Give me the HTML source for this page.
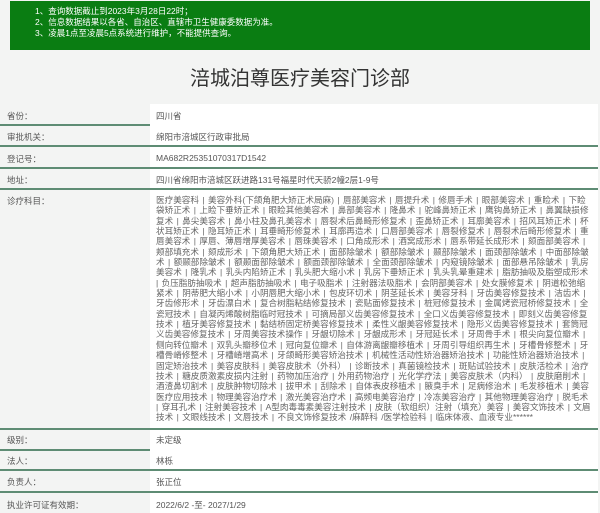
<!DOCTYPE html>
<html><head><meta charset="utf-8"><style>
body{margin:0;width:600px;height:513px;overflow:hidden;background:#f3f4f3;font-family:"Liberation Sans","Noto Sans CJK SC",sans-serif;color:#555;}
.banner{position:absolute;left:10px;top:1px;width:580px;height:49px;background:#0a7d12;color:#fff;font-size:8.5px;line-height:11px;box-sizing:border-box;padding:5px 0 0 25px;}
.title{position:absolute;left:0;top:62px;width:600px;text-align:center;font-size:20px;color:#333;}
.white{position:absolute;left:150px;top:104px;width:448px;height:409px;background:#fff;}
.row{position:absolute;left:0;width:598px;font-size:8.5px;}
.row .l{position:absolute;left:7px;}
.row .v{position:absolute;left:156px;}
.line{position:absolute;left:0;height:2px;background:#5e8c74;}
.items{position:absolute;left:156px;top:195px;width:436px;font-size:8.6px;line-height:10.35px;word-spacing:1px;color:#666;word-break:break-all;}
</style></head><body>
<div class="banner">1、查询数据截止到2023年3月28日22时；<br>2、信息数据结果以各省、自治区、直辖市卫生健康委数据为准。<br>3、凌晨1点至凌晨5点系统进行维护，不能提供查询。</div>
<div class="title">涪城泊尊医疗美容门诊部</div>
<div class="white"></div>
<div class="row" style="top:110px"><span class="l">省份：</span><span class="v">四川省</span></div>
<div class="line" style="top:124px;width:150px"></div>
<div class="row" style="top:131px"><span class="l">审批机关：</span><span class="v">绵阳市涪城区行政审批局</span></div>
<div class="line" style="top:145px;width:598px"></div>
<div class="row" style="top:153px"><span class="l">登记号：</span><span class="v">MA682R25351070317D1542</span></div>
<div class="line" style="top:167px;width:598px"></div>
<div class="row" style="top:174px"><span class="l">地址：</span><span class="v">四川省绵阳市涪城区跃进路131号福星时代天骄2幢2层1-9号</span></div>
<div class="line" style="top:188px;width:598px"></div>
<div class="row" style="top:195px"><span class="l">诊疗科目：</span></div>
<div class="items">医疗美容科 | 美容外科(下颌角肥大矫正术局麻) | 唇部美容术 | 唇提升术 | 修唇手术 | 眼部美容术 | 重睑术 | 下睑袋矫正术 | 上睑下垂矫正术 | 眼睑其他美容术 | 鼻部美容术 | 隆鼻术 | 驼峰鼻矫正术 | 鹰钩鼻矫正术 | 鼻翼缺损修复术 | 鼻尖美容术 | 鼻小柱及鼻孔美容术 | 唇裂术后鼻畸形修复术 | 歪鼻矫正术 | 耳廓美容术 | 招风耳矫正术 | 杯状耳矫正术 | 隐耳矫正术 | 耳垂畸形修复术 | 耳廓再造术 | 口唇部美容术 | 唇裂修复术 | 唇裂术后畸形修复术 | 重唇美容术 | 厚唇、薄唇增厚美容术 | 唇珠美容术 | 口角成形术 | 酒窝成形术 | 唇系带延长成形术 | 颏面部美容术 | 颊部填充术 | 颏成形术 | 下颌角肥大矫正术 | 面部除皱术 | 额部除皱术 | 颞部除皱术 | 面颈部除皱术 | 中面部除皱术 | 额颞部除皱术 | 额颞面部除皱术 | 额面颈部除皱术 | 全面颈部除皱术 | 内窥镜除皱术 | 面部悬吊除皱术 | 乳房美容术 | 隆乳术 | 乳头内陷矫正术 | 乳头肥大缩小术 | 乳房下垂矫正术 | 乳头乳晕重建术 | 脂肪抽吸及脂塑成形术 | 负压脂肪抽吸术 | 超声脂肪抽吸术 | 电子吸脂术 | 注射器法吸脂术 | 会阴部美容术 | 处女膜修复术 | 阴道松弛缩紧术 | 阴蒂肥大缩小术 | 小阴唇肥大缩小术 | 包皮环切术 | 阴茎延长术 | 美容牙科 | 牙齿美容修复技术 | 洁齿术 | 牙齿修形术 | 牙齿漂白术 | 复合树脂粘结修复技术 | 瓷贴面修复技术 | 桩冠修复技术 | 金属烤瓷冠桥修复技术 | 全瓷冠技术 | 自凝丙烯酸树脂临时冠技术 | 可摘局部义齿美容修复技术 | 全口义齿美容修复技术 | 即刻义齿美容修复技术 | 植牙美容修复技术 | 黏结桥固定桥美容修复技术 | 柔性义龈美容修复技术 | 隐形义齿美容修复技术 | 套筒冠义齿美容修复技术 | 牙周美容技术操作 | 牙龈切除术 | 牙龈成形术 | 牙冠延长术 | 牙周骨手术 | 根尖向复位瓣术 | 侧向转位瓣术 | 双乳头瓣移位术 | 冠向复位瓣术 | 自体游离龈瓣移植术 | 牙周引导组织再生术 | 牙槽骨修整术 | 牙槽骨嵴修整术 | 牙槽嵴增高术 | 牙颌畸形美容矫治技术 | 机械性活动性矫治器矫治技术 | 功能性矫治器矫治技术 | 固定矫治技术 | 美容皮肤科 | 美容皮肤术（外科） | 诊断技术 | 真菌镜检技术 | 斑贴试验技术 | 皮肤活检术 | 治疗技术 | 糖皮质激素皮损内注射 | 药物加压治疗 | 外用药物治疗 | 光化学疗法 | 美容皮肤术（内科） | 皮肤磨削术 | 酒渣鼻切割术 | 皮肤肿物切除术 | 拔甲术 | 刮除术 | 自体表皮移植术 | 腋臭手术 | 足病修治术 | 毛发移植术 | 美容医疗应用技术 | 物理美容治疗术 | 激光美容治疗术 | 高频电美容治疗 | 冷冻美容治疗 | 其他物理美容治疗 | 脱毛术 | 穿耳孔术 | 注射美容技术 | A型肉毒毒素美容注射技术 | 皮肤（软组织）注射（填充）美容 | 美容文饰技术 | 文眉技术 | 文眼线技术 | 文唇技术 | 不良文饰修复技术 /麻醉科 /医学检验科 | 临床体液、血液专业******</div>
<div class="line" style="top:428px;width:598px"></div>
<div class="row" style="top:434px"><span class="l">级别：</span><span class="v">未定级</span></div>
<div class="line" style="top:449px;width:150px"></div>
<div class="row" style="top:455px"><span class="l">法人：</span><span class="v">林栎</span></div>
<div class="line" style="top:469px;width:598px"></div>
<div class="row" style="top:476px"><span class="l">负责人：</span><span class="v">张正位</span></div>
<div class="line" style="top:491px;width:598px"></div>
<div class="row" style="top:499px"><span class="l">执业许可证有效期：</span><span class="v">2022/6/2 -至- 2027/1/29</span></div>
</body></html>
